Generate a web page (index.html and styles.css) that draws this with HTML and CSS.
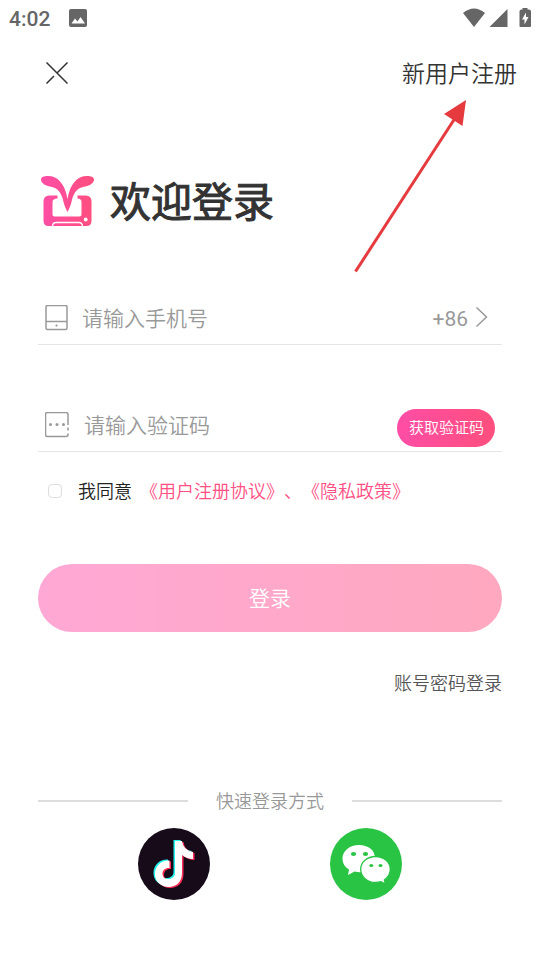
FILE: index.html
```html
<!DOCTYPE html>
<html lang="zh-CN">
<head>
<meta charset="utf-8">
<meta name="viewport" content="width=device-width, initial-scale=1">
<title>欢迎登录</title>
<link rel="stylesheet" href="styles.css">
</head>
<body>
<div class="screen">
  <header class="status">
    <span class="time">4:02</span>
    <svg class="picture" width="18" height="18" viewBox="0 0 18 18"><rect width="18" height="18" rx="2" fill="#666"/><path d="M2.500 14.500L6 9.500l2.500 3 3-4.500 4.500 6.500z" fill="#fff"/></svg>
    <svg class="system" width="68" height="20" viewBox="0 0 68 20" fill="#666"><path d="M0 5Q11-4 22 5L11 19z"/><path d="M44.500 1v18h-18z"/><path fill-rule="evenodd" d="M59.500 0h5v1.500h1.500q2 0 2 2V18q0 1-1 1H57.500q-1 0-1-1V3.500q0-2 2-2h1zM63 4.500l-4 7h2.500v5l4-7.500H63z"/></svg>
  </header>

  <nav class="topbar">
    <button class="close" type="button" aria-label="关闭"><svg width="22" height="22" viewBox="0 0 22 22" fill="none" stroke="#333" stroke-width="1.500"><path d="M.5.5l21 21M21.500.5l-11 11M8 14L.5 21.500"/></svg></button>
    <a class="register" href="#">新用户注册</a>
  </nav>

  <main class="content">
    <div class="brand">
      <svg width="54" height="50" viewBox="0 0 54 50">
        <defs><linearGradient id="pink" gradientUnits="userSpaceOnUse" x1="0" x2="54" y1="0" y2="0"><stop offset="0" stop-color="#ff4da6"/><stop offset="1" stop-color="#ff4f7d"/></linearGradient></defs>
        <g fill="url(#pink)">
          <path d="M26.500 36C25 33 23.500 30 22.500 26C21 18 17.500 12.500 11 11C5 10 0 7.500 0 3.500C0 1 3 0 7 0C17 0 24 8 26.500 23C29 8 36 0 46 0C50 0 53 1 53 3.500C53 7.500 48 10 42 11C35.500 12.500 32 18 30.500 26C29.500 30 28 33 26.500 36z"/>
          <path d="M8.500 19.500h8v3q-5 0-5 3.500v12.500q0 2 2 2h25q2 0 2-2V26q0-3.500-4-3.500v-3h8q6 0 6 6v19q0 5.500-5 5.500H7.500q-5 0-5-5.500v-19q0-6 6-6z"/>
        </g>
        <circle cx="44.700" cy="43.500" r="1.900" fill="#fff"/>
        <path d="M11.500 50q.5-3.500 3.500-3.500h23q3 0 3.500 3.500" fill="none" stroke="#fff" stroke-width="1.300"/>
      </svg>
      <h1>欢迎登录</h1>
    </div>

    <form>
      <div class="field phone">
        <svg width="24" height="26" viewBox="0 0 24 26" fill="none" stroke="#999" stroke-width="1.500"><rect x="1" y=".5" width="21" height="24" rx="1.500"/><path d="M1 16.500h21"/><circle cx="11.500" cy="20.500" r=".8" fill="#999" stroke-width=".6"/></svg>
        <input type="tel" aria-label="手机号" placeholder="请输入手机号">
        <button class="region" type="button"><span>+86</span><svg width="12" height="22" viewBox="0 0 12 22" fill="none" stroke="#999" stroke-width="1.500"><path d="M.5.5L10.500 10 .5 19.500"/></svg></button>
      </div>
      <div class="field code">
        <svg width="26" height="26" viewBox="0 0 26 26" fill="none" stroke="#999" stroke-width="1.500"><path d="M23 13V2.500q0-2-2-2H2.500q-2 0-2 2v20q0 2 2 2H21q2 0 2-2v-1M23 15.500v3"/><g fill="#999" stroke="none"><circle cx="5.500" cy="12.500" r="1.500"/><circle cx="12" cy="12.500" r="1.500"/><circle cx="18.500" cy="12.500" r="1.500"/></g></svg>
        <input type="text" aria-label="验证码" placeholder="请输入验证码">
        <button class="send" type="button">获取验证码</button>
      </div>
      <div class="agreement">
        <input id="agree" type="checkbox">
        <label for="agree">我同意</label>
        <span class="terms"><a href="#">《用户注册协议》</a>、<a href="#">《隐私政策》</a></span>
      </div>
      <button class="login" type="submit">登录</button>
    </form>
    <a class="password" href="#">账号密码登录</a>

    <section class="quick">
      <h2>快速登录方式</h2>
      <div class="providers">
        <button type="button" aria-label="抖音登录"><svg width="72" height="72" viewBox="0 0 72 72"><defs><path id="note" d="M37 13h7q1 9 11 11v7q-6 0-11-4v18c0 9-6 14-13.500 14S17 53.500 17 46s6-14 14.500-13.500v7.500c-4-.5-7 2-7 5.700 0 3 2 5.300 5.500 5.300S37 49 37 45z"/></defs><circle cx="36" cy="36" r="36" fill="#170b1a"/><use href="#note" x="-1.500" y="-1" fill="#25f4ee"/><use href="#note" x="1.500" y="1" fill="#fe2c55"/><use href="#note" fill="#fff"/></svg></button>
        <button type="button" aria-label="微信登录"><svg width="72" height="72" viewBox="0 0 72 72"><circle cx="36" cy="36" r="36" fill="#2ac445"/><path d="M29 17c-9.500 0-16.500 6-16.500 13.500 0 5 2.500 8.500 6.500 11L18 47l6.500-3.500q4 1 8 .5L45 30C45 22 38 17 29 17z" fill="#fff"/><path d="M45.500 28.500C37 28.500 30.700 34 30.700 41.300S37 54.500 45.500 54.500q3 0 5.500-.8L55.500 56l-1.200-4c3.500-2.500 6-6 6-10.700C60.300 34 54 28.500 45.500 28.500z" fill="#fff" stroke="#2ac445" stroke-width="1.300"/><g fill="#2ac445"><ellipse cx="23.500" cy="26" rx="2.600" ry="2"/><ellipse cx="35.500" cy="26" rx="2.600" ry="2"/><ellipse cx="41.300" cy="37.500" rx="2" ry="1.600"/><ellipse cx="50.500" cy="37.500" rx="2" ry="1.600"/></g></svg></button>
      </div>
    </section>
  </main>
  <svg class="pointer" width="114" height="174" viewBox="0 0 114 174" aria-hidden="true"><path d="M1.500 171.500L100.500 19" stroke="#e53b3e" stroke-width="3"/><path d="M112 0L90 14l18.500 12z" fill="#e53b3e"/></svg>
</div>
</body>
</html>
```
FILE: styles.css
```css
* { box-sizing: border-box; }
body {
  margin: 0;
  background: #fff;
  color: #333;
  font-family: Roboto, "Noto Sans CJK SC", sans-serif;
  font-size: 18px;
  font-weight: 350;
  line-height: 26px;
  text-spacing-trim: space-all;
}
svg { display: block; flex: none; }
a { color: inherit; text-decoration: none; }
h1, h2 { margin: 0; }
button {
  padding: 0;
  border: 0;
  background: none;
  color: inherit;
  font: inherit;
}
.screen { position: relative; min-height: 100vh; }
.status {
  display: flex;
  align-items: center;
  height: 36px;
  padding: 0 9px;
  color: #666;
}
.time { padding-top: 2px; font-size: 21px; font-weight: 500; }
.picture { margin-left: 19px; }
.system { margin-left: auto; }
.topbar {
  display: flex;
  align-items: center;
  justify-content: space-between;
  height: 74px;
  padding: 0 23px 0 46px;
}
.register { padding-top: 4px; font-size: 23px; line-height: 32px; }
.content { padding: 60px 38px 0; }
.brand {
  display: flex;
  align-items: center;
  gap: 15px;
  height: 62px;
  padding-left: 3px;
}
h1 {
  padding-top: 4px;
  font-size: 41px;
  line-height: 62px;
  font-weight: 400;
  -webkit-text-stroke: 1px currentColor;
}
.field {
  display: flex;
  align-items: center;
  height: 54px;
  padding: 0 14px 0 7px;
  border-bottom: 1px solid #e5e5e5;
}
.phone { margin-top: 59px; }
.code { margin-top: 53px; padding-right: 7px; }
.field input {
  flex: 1;
  min-width: 0;
  height: 34px;
  padding: 2px 0 0;
  margin-left: 13px;
  border: 0;
  outline: 0;
  background: none;
  font: inherit;
  font-size: 21px;
}
.field input::placeholder { color: #999; opacity: 1; }
.region {
  display: flex;
  align-items: center;
  gap: 8px;
  color: #999;
  font-size: 21px;
  font-weight: 400;
}
.region span { padding-top: 2px; }
.send {
  height: 38px;
  padding: 0 11px 0 12px;
  margin-top: 6px;
  border-radius: 19px;
  background: linear-gradient(90deg, #ff4da6, #ff4f7d);
  color: #fff;
  font-size: 15px;
}
.agreement {
  display: flex;
  align-items: center;
  margin-top: 25px;
  padding-left: 10px;
}
.agreement input {
  appearance: none;
  width: 14px;
  height: 14px;
  margin: 0 16px 0 0;
  border: 1px solid #ddd;
  border-radius: 4px;
}
.agreement input:checked { background: #ff4f7d; }
.agreement label, .terms { padding-top: 2px; }
.agreement label { margin-right: 8px; color: #222; }
.terms { color: #ff4f83; }
.login {
  width: 100%;
  height: 68px;
  padding-top: 2px;
  margin-top: 59px;
  border-radius: 34px;
  background: linear-gradient(90deg, #ffa8d5, #ffa8bf);
  color: #fff;
  font-size: 21px;
}
.password {
  display: block;
  width: fit-content;
  margin: 39px 0 0 auto;
  color: #555;
}
.quick { margin-top: 92px; }
h2 {
  display: flex;
  align-items: center;
  gap: 28px;
  color: #999;
  font-size: 18px;
  font-weight: inherit;
}
h2::before, h2::after {
  content: "";
  flex: 1;
  height: 2px;
  margin-bottom: 2px;
  background: #ddd;
}
.providers {
  display: flex;
  justify-content: center;
  gap: 120px;
  margin-top: 13px;
}
.pointer {
  position: absolute;
  top: 100px;
  right: 72px;
  pointer-events: none;
}
```
